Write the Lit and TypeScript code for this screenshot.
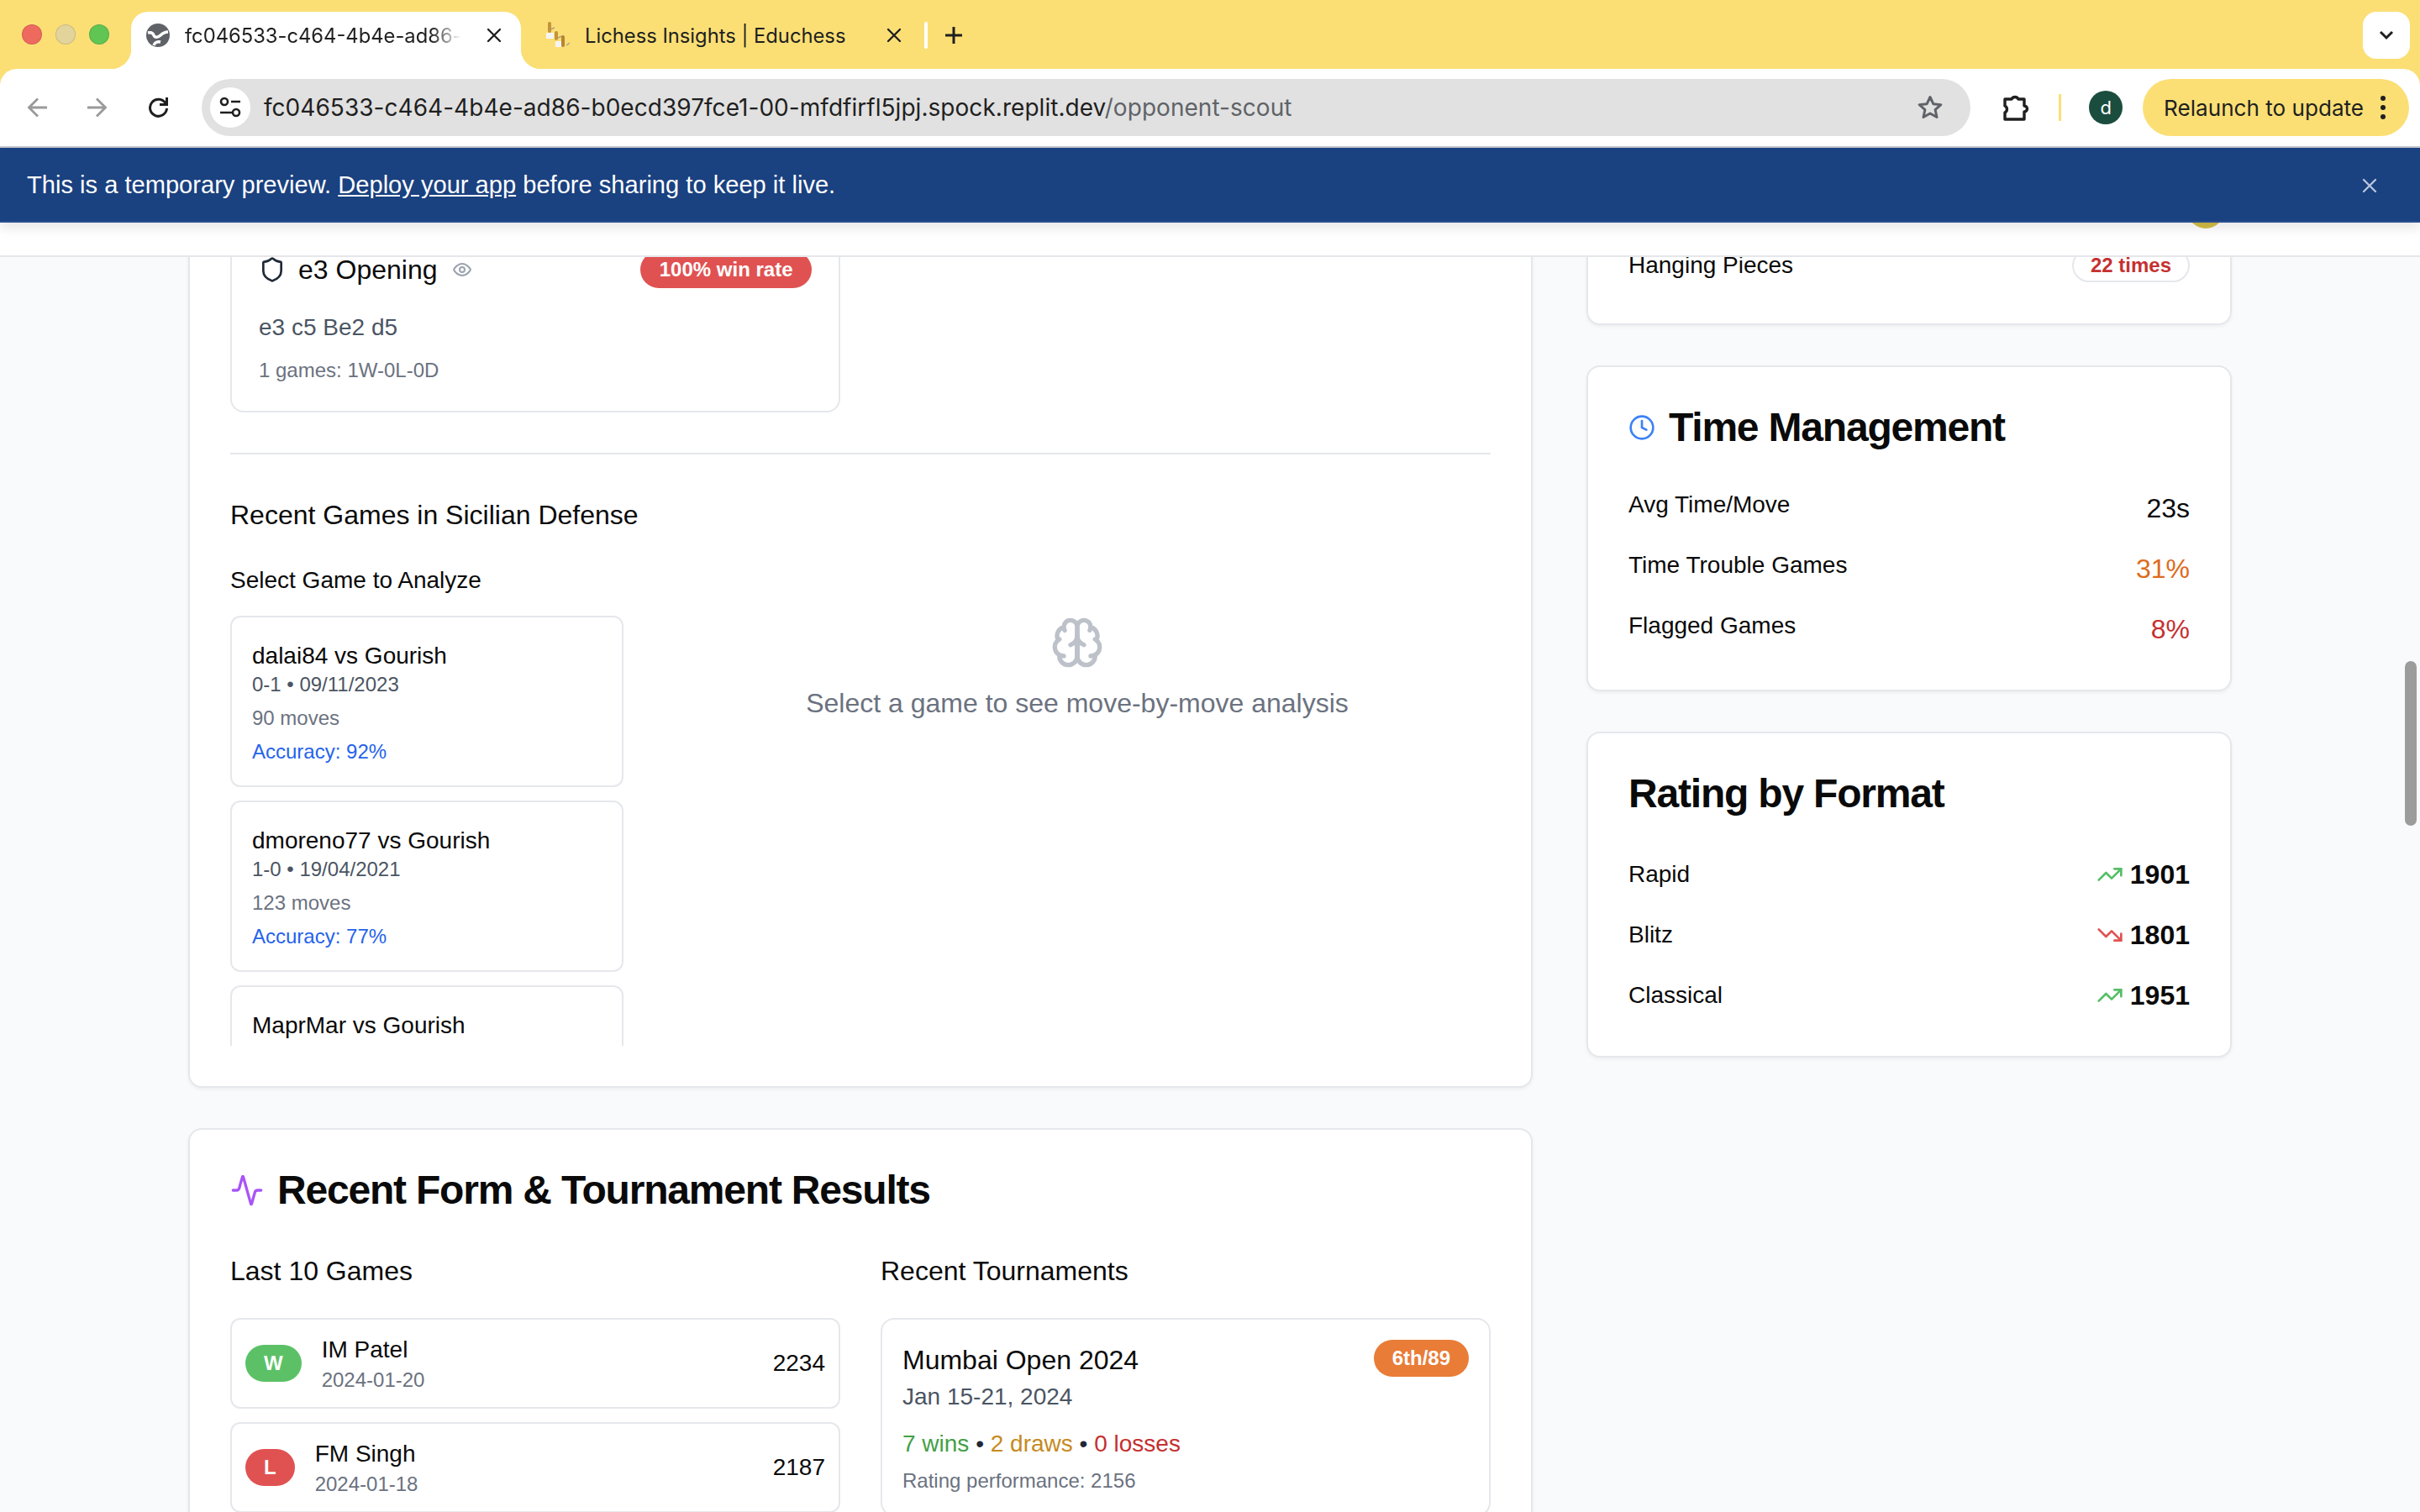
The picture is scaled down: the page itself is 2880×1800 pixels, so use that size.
import { LitElement, html, css, svg } from 'lit';
import { customElement } from 'lit/decorators.js';

const icon = (paths: unknown, size: number, cls = '') => html`
    <svg class="icon ${cls}" width=${size} height=${size} viewBox="0 0 24 24" fill="none" stroke="currentColor"
        stroke-width="2" stroke-linecap="round" stroke-linejoin="round">${paths}</svg>
`;

const SHIELD = svg`<path d="M20 13c0 5-3.5 7.5-7.66 8.95a1 1 0 0 1-.67-.01C7.5 20.5 4 18 4 13V6a1 1 0 0 1 1-1c2 0 4.5-1.2 6.24-2.72a1.17 1.17 0 0 1 1.52 0C14.51 3.81 17 5 19 5a1 1 0 0 1 1 1z"/>`;
const EYE = svg`<path d="M2 12s3.5-7 10-7 10 7 10 7-3.5 7-10 7-10-7-10-7Z"/><circle cx="12" cy="12" r="3"/>`;
const BRAIN = svg`<path d="M12 5a3 3 0 1 0-5.997.125 4 4 0 0 0-2.526 5.77 4 4 0 0 0 .556 6.588A4 4 0 1 0 12 18Z"/><path d="M12 5a3 3 0 1 1 5.997.125 4 4 0 0 1 2.526 5.77 4 4 0 0 1-.556 6.588A4 4 0 1 1 12 18Z"/><path d="M15 13a4.5 4.5 0 0 1-3-4 4.5 4.5 0 0 1-3 4"/><path d="M17.599 6.5a3 3 0 0 0 .399-1.375"/><path d="M6.003 5.125A3 3 0 0 0 6.401 6.5"/><path d="M3.477 10.896a4 4 0 0 1 .585-.396"/><path d="M19.938 10.5a4 4 0 0 1 .585.396"/><path d="M6 18a4 4 0 0 1-1.967-.516"/><path d="M19.967 17.484A4 4 0 0 1 18 18"/><path d="M12 18V9"/>`;
const CLOCK = svg`<circle cx="12" cy="12" r="10"/><polyline points="12 6 12 12 16 14"/>`;
const ACTIVITY = svg`<path d="M22 12h-2.48a2 2 0 0 0-1.93 1.46l-2.35 8.36a.25.25 0 0 1-.48 0L9.24 2.18a.25.25 0 0 0-.48 0l-2.35 8.36A2 2 0 0 1 4.49 12H2"/>`;
const TREND_UP = svg`<polyline points="22 7 13.5 15.5 8.5 10.5 2 17"/><polyline points="16 7 22 7 22 13"/>`;
const TREND_DOWN = svg`<polyline points="22 17 13.5 8.5 8.5 13.5 2 7"/><polyline points="16 17 22 17 22 11"/>`;
const CROSS = svg`<path d="M6 6l12 12M18 6L6 18"/>`;

const GAMES = [
    { title: 'dalai84 vs Gourish', meta: '0-1 • 09/11/2023', moves: '90 moves', accuracy: 'Accuracy: 92%' },
    { title: 'dmoreno77 vs Gourish', meta: '1-0 • 19/04/2021', moves: '123 moves', accuracy: 'Accuracy: 77%' },
    { title: 'MaprMar vs Gourish', meta: '', moves: '', accuracy: '' },
];

const LAST_GAMES = [
    { result: 'W', name: 'IM Patel', date: '2024-01-20', rating: 2234 },
    { result: 'L', name: 'FM Singh', date: '2024-01-18', rating: 2187 },
];

const TIME_ROWS = [
    { label: 'Avg Time/Move', value: '23s', cls: '' },
    { label: 'Time Trouble Games', value: '31%', cls: 'orange' },
    { label: 'Flagged Games', value: '8%', cls: 'red' },
];

const RATINGS = [
    { label: 'Rapid', value: 1901, up: true },
    { label: 'Blitz', value: 1801, up: false },
    { label: 'Classical', value: 1951, up: true },
];

@customElement('app-root')
export class AppRoot extends LitElement {
    static styles = css`
        :host {
            display: block;
            position: relative;
            width: 2880px;
            height: 1800px;
            overflow: hidden;
            font-family: "Liberation Sans", Arial, sans-serif;
            color: #0a0a0a;
            background: #f9fafb;
        }
        .shell {
            display: flex;
            flex-direction: column;
            height: 1800px;
        }
        .icon {
            display: block;
            flex: none;
        }

        /* browser chrome */
        .tabbar {
            display: flex;
            align-items: flex-start;
            height: 82px;
            padding: 14px 12px 0 26px;
            box-sizing: border-box;
            background: #fbdf75;
            font-family: Inter, sans-serif;
            font-size: 23.75px;
            color: #1f1f1f;
        }
        .lights {
            display: flex;
            gap: 16px;
            margin: 15px 26px 0 0;
        }
        .lights span {
            width: 24px;
            height: 24px;
            border-radius: 50%;
            box-sizing: border-box;
            border: 1px solid rgba(0, 0, 0, .12);
        }
        .tab {
            display: flex;
            align-items: center;
            position: relative;
            width: 464px;
            height: 68px;
            padding: 0 18px 12px;
            box-sizing: border-box;
            border-radius: 20px 20px 0 0;
            background: #fff;
            white-space: nowrap;
        }
        .tab::before,
        .tab::after {
            content: '';
            position: absolute;
            bottom: 0;
            width: 24px;
            height: 24px;
        }
        .tab::before {
            left: -24px;
            background: radial-gradient(circle at 0 0, transparent 24px, #fff 24.5px);
        }
        .tab::after {
            right: -24px;
            background: radial-gradient(circle at 100% 0, transparent 24px, #fff 24.5px);
        }
        .tab-title {
            flex: 1;
            min-width: 0;
            margin-left: 18px;
            overflow: hidden;
        }
        .tab-title.fade {
            -webkit-mask-image: linear-gradient(90deg, #000 88%, transparent 99%);
            mask-image: linear-gradient(90deg, #000 88%, transparent 99%);
        }
        .tab-x {
            margin-left: 22px;
            color: #1f1f1f;
        }
        .tab.idle {
            width: 478px;
            background: none;
            padding: 0 20px 12px 30px;
        }
        .tab.idle::before,
        .tab.idle::after {
            display: none;
        }
        .tab-sep {
            width: 4px;
            height: 32px;
            margin: 12px 0 0 2px;
            border-radius: 2px;
            background: #fff;
        }
        .new-tab {
            margin: 17px 0 0 20px;
        }
        .tab-menu {
            display: flex;
            align-items: center;
            justify-content: center;
            width: 56px;
            height: 56px;
            margin-left: auto;
            border-radius: 16px;
            background: #fff;
        }
        .chrome-toolbar-wrap {
            background: #fbdf75;
        }
        .toolbar {
            display: flex;
            align-items: center;
            height: 94px;
            padding: 0 13px 2px 32px;
            box-sizing: border-box;
            background: #fff;
            border-radius: 20px 20px 0 0;
            box-shadow: inset 0 -2px 0 #c6c9ce;
            font-family: Inter, sans-serif;
            color: #1f1f1f;
        }
        .nav {
            display: flex;
            gap: 48px;
            color: #9a9a9a;
        }
        .nav .active {
            color: #1f1f1f;
        }
        .omnibox {
            display: flex;
            align-items: center;
            width: 2106px;
            height: 68px;
            margin-left: 40px;
            padding: 0 32px 0 10px;
            box-sizing: border-box;
            border-radius: 34px;
            background: #e1e1e1;
            font-size: 28px;
        }
        .site-info {
            display: flex;
            align-items: center;
            justify-content: center;
            width: 48px;
            height: 48px;
            border-radius: 50%;
            background: #fff;
        }
        .url {
            flex: 1;
            margin-left: 16px;
            white-space: nowrap;
            letter-spacing: .04px;
        }
        .url span {
            color: #5f6368;
        }
        .tool-ext {
            margin-left: 37px;
        }
        .tool-sep {
            width: 3px;
            height: 32px;
            margin-left: 34px;
            background: #fbdf75;
        }
        .avatar {
            display: flex;
            align-items: center;
            justify-content: center;
            width: 40px;
            height: 40px;
            margin-left: 33px;
            border-radius: 50%;
            background: #1b4d3e;
            color: #fff;
            font-size: 22px;
        }
        .relaunch {
            display: flex;
            align-items: center;
            width: 317px;
            height: 68px;
            margin-left: 24px;
            padding: 0 28px 0 25px;
            box-sizing: border-box;
            border-radius: 34px;
            background: #fbdf75;
            font-size: 26.1px;
            white-space: nowrap;
        }
        .dots {
            display: flex;
            flex-direction: column;
            gap: 5px;
            margin-left: auto;
        }
        .dots i {
            width: 6px;
            height: 6px;
            border-radius: 50%;
            background: #1f1f1f;
        }
        .banner {
            display: flex;
            align-items: center;
            justify-content: space-between;
            position: relative;
            z-index: 2;
            height: 89px;
            padding: 2px 46px 0 32px;
            box-sizing: border-box;
            background: #1a4180;
            border-bottom: 2px solid #2a4f90;
            box-shadow: 0 6px 14px rgba(0, 0, 0, .1);
            color: #fff;
            font-size: 29.1px;
        }
        .banner a {
            color: inherit;
            font-weight: 500;
            text-decoration: underline;
        }
        .banner .icon {
            color: #b9c6dc;
        }

        /* site */
        .site-header {
            display: flex;
            justify-content: flex-end;
            height: 41px;
            padding-right: 233px;
            box-sizing: border-box;
            overflow: hidden;
            background: #fff;
            border-bottom: 2px solid #e5e7eb;
            position: relative;
            z-index: 1;
        }
        .site-avatar {
            width: 44px;
            height: 44px;
            margin-top: -37px;
            border-radius: 50%;
            background: #d4be47;
        }
        .viewport {
            flex: 1;
            min-height: 0;
            overflow: hidden;
        }
        .columns {
            display: flex;
            gap: 64px;
            margin-top: -89px;
            padding-left: 224px;
        }
        .left {
            display: flex;
            flex-direction: column;
            gap: 48px;
            width: 1600px;
            flex: none;
        }
        .right {
            display: flex;
            flex-direction: column;
            gap: 48px;
            width: 768px;
            flex: none;
        }
        .card {
            box-sizing: border-box;
            padding: 48px;
            border: 2px solid #e5e7eb;
            border-radius: 16px;
            background: #fff;
            box-shadow: 0 2px 4px rgba(0, 0, 0, .05);
        }
        .card-title {
            display: flex;
            align-items: center;
            height: 48px;
            margin: 0 0 48px;
            font-size: 48px;
            line-height: 48px;
            font-weight: 700;
            letter-spacing: -1.2px;
        }

        /* opening card */
        .opening {
            width: 726px;
            box-sizing: border-box;
            padding: 30px 32px 32px;
            border: 2px solid #e5e7eb;
            border-radius: 16px;
        }
        .opening-head {
            display: flex;
            align-items: center;
            justify-content: space-between;
            height: 44px;
            margin-bottom: 27px;
        }
        .opening-name {
            display: flex;
            align-items: center;
            font-size: 32px;
        }
        .shield {
            color: #1f2937;
            margin-right: 15px;
        }
        .eye {
            color: #9ca3af;
            margin-left: 18px;
        }
        .badge {
            display: flex;
            align-items: center;
            height: 44px;
            padding: 0 22px;
            box-sizing: border-box;
            border-radius: 22px;
            color: #fff;
            font-size: 24px;
            font-weight: 700;
        }
        .badge.loss {
            background: #e05252;
            padding: 0 22.5px;
        }
        .badge.place {
            background: #e97c37;
        }
        .moves {
            font-size: 28px;
            line-height: 40px;
            color: #4b5563;
        }
        .note {
            margin-top: 15px;
            font-size: 24px;
            line-height: 32px;
            color: #6b7280;
        }
        .divider {
            height: 2px;
            margin: 48px 0;
            background: #e5e7eb;
        }
        .sub {
            margin: 0;
            font-size: 32px;
            line-height: 48px;
            font-weight: 400;
        }
        .select-label {
            margin: 32px 0 24px;
            padding-top: 2px;
            height: 38px;
            font-size: 28px;
            line-height: 40px;
        }
        .analysis {
            display: grid;
            grid-template-columns: 468px 984px;
            gap: 48px;
        }
        .game-list {
            display: flex;
            flex-direction: column;
            gap: 16px;
            height: 512px;
            overflow: hidden;
        }
        .game {
            flex: none;
            padding: 24px;
            border: 2px solid #e5e7eb;
            border-radius: 12px;
        }
        .game-title {
            padding-top: 2px;
            height: 38px;
            font-size: 28px;
            line-height: 40px;
        }
        .game-meta {
            font-size: 24px;
            line-height: 32px;
            color: #4b5563;
        }
        .game-moves {
            margin-top: 8px;
            font-size: 24px;
            line-height: 32px;
            color: #6b7280;
        }
        .game-accuracy {
            margin-top: 8px;
            font-size: 24px;
            line-height: 32px;
            color: #2563eb;
        }
        .placeholder {
            display: flex;
            flex-direction: column;
            align-items: center;
            gap: 16px;
            color: #6b7280;
            font-size: 32px;
            line-height: 48px;
        }
        .placeholder .icon {
            color: #bdc1c9;
        }

        /* recent form */
        .purple {
            color: #a855f7;
            margin-right: 16px;
        }
        .form-grid {
            display: grid;
            grid-template-columns: 726px 726px;
            gap: 48px;
        }
        .form-grid .sub {
            margin-bottom: 32px;
        }
        .result-list {
            display: flex;
            flex-direction: column;
            gap: 16px;
        }
        .result {
            display: flex;
            align-items: center;
            justify-content: space-between;
            padding: 16px;
            border: 2px solid #e5e7eb;
            border-radius: 12px;
        }
        .result-main {
            display: flex;
            align-items: center;
            gap: 24px;
        }
        .pill {
            display: flex;
            align-items: center;
            justify-content: center;
            height: 44px;
            padding: 0 22px;
            border-radius: 22px;
            color: #fff;
            font-size: 24px;
            font-weight: 700;
        }
        .pill.w {
            background: #5cc166;
        }
        .pill.l {
            background: #e05252;
        }
        .result-name {
            font-size: 28px;
            line-height: 40px;
        }
        .result-date {
            font-size: 24px;
            line-height: 32px;
            color: #6b7280;
        }
        .result-rating {
            font-size: 28px;
        }
        .tournament {
            padding: 24px;
            border: 2px solid #e5e7eb;
            border-radius: 16px;
        }
        .tournament-head {
            display: flex;
            align-items: flex-start;
            justify-content: space-between;
        }
        .tournament-name {
            font-size: 32px;
            line-height: 48px;
        }
        .tournament-date {
            font-size: 28px;
            line-height: 40px;
            color: #4b5563;
        }
        .tournament-score {
            margin-top: 16px;
            font-size: 28px;
            line-height: 40px;
            color: #1f2937;
        }
        .score-w { color: #43a047; }
        .score-d { color: #c68a22; }
        .score-l { color: #c53030; }
        .tournament-perf {
            margin-top: 8px;
            font-size: 24px;
            line-height: 32px;
            color: #6b7280;
        }

        /* sidebar */
        .tips {
            padding-top: 77px;
            padding-bottom: 49px;
        }
        .tip-row {
            display: flex;
            align-items: center;
            justify-content: space-between;
            height: 40px;
            font-size: 28px;
        }
        .tip-badge {
            display: flex;
            align-items: center;
            height: 40px;
            padding: 0 20px;
            box-sizing: border-box;
            border: 2px solid #e5e7eb;
            border-radius: 20px;
            color: #c53030;
            font-size: 24px;
            font-weight: 700;
        }
        .clock {
            color: #3b82f6;
            margin-right: 16px;
        }
        .stat-rows {
            display: flex;
            flex-direction: column;
            gap: 24px;
        }
        .stat {
            display: flex;
            justify-content: space-between;
            font-size: 28px;
            line-height: 40px;
        }
        .stat b {
            font-size: 32px;
            line-height: 48px;
            font-weight: 400;
        }
        .stat b.orange { color: #dd6b20; }
        .stat b.red { color: #c53030; }
        .rating {
            align-items: center;
        }
        .rating-value {
            display: flex;
            align-items: center;
            gap: 8px;
            font-size: 32px;
            line-height: 48px;
            font-weight: 700;
        }
        .up { color: #55bf66; }
        .down { color: #e05252; }

        .scrollbar {
            position: absolute;
            top: 787px;
            right: 4px;
            width: 14px;
            height: 196px;
            border-radius: 7px;
            background: #9c9c9c;
        }
    `;

    private renderChrome() {
        return html`
            <div class="tabbar">
                <div class="lights">
                    <span style="background:#ee6a5f"></span>
                    <span style="background:#e2d49a"></span>
                    <span style="background:#61c554"></span>
                </div>
                <div class="tab">
                    <svg width="28" height="28" viewBox="0 0 28 28" style="flex:none">
                        <circle cx="14" cy="14" r="14" fill="#5f6368"/>
                        <path d="M2 11c4-1 6 0 7 3s5 3 8 0c2-2 5-4 9-4M9 26c1-3 4-5 8-4" fill="none" stroke="#fff" stroke-width="3.4"/>
                    </svg>
                    <div class="tab-title fade">fc046533-c464-4b4e-ad86-b0ecd397fce1-00-mfdfirfl5jpj</div>
                    ${icon(CROSS, 28, 'tab-x')}
                </div>
                <div class="tab idle">
                    <svg width="28" height="32" viewBox="0 0 28 32" style="flex:none">
                        <rect x="0" y="13" width="9" height="7" fill="#f4f4f4"/>
                        <rect x="11" y="23" width="7" height="7" fill="#f4f4f4"/>
                        <path d="M5 9l5-2M14 19l5-2M24 28l4-3" stroke="#a8a28a" stroke-width="1.5" fill="none"/>
                        <rect x="2" y="0" width="4" height="13" rx="2" fill="#c4943a"/>
                        <rect x="10" y="11" width="4" height="11" rx="2" fill="#c4943a"/>
                        <rect x="18" y="16" width="4" height="14" rx="2" fill="#b9852e"/>
                    </svg>
                    <div class="tab-title">Lichess Insights | Educhess</div>
                    ${icon(CROSS, 28, 'tab-x')}
                </div>
                <div class="tab-sep"></div>
                <div class="new-tab">
                    <svg class="icon" width="22" height="22" viewBox="0 0 22 22" fill="none" stroke="#1f1f1f" stroke-width="3">
                        <path d="M11 1v20M1 11h20"/>
                    </svg>
                </div>
                <div class="tab-menu">
                    <svg width="20" height="12" viewBox="0 0 20 12" fill="none" stroke="#1f1f1f" stroke-width="3">
                        <path d="M3 2l7 7 7-7"/>
                    </svg>
                </div>
            </div>
            <div class="chrome-toolbar-wrap">
                <div class="toolbar">
                    <div class="nav">
                        <svg width="24" height="24" viewBox="0 0 24 24" fill="none" stroke="currentColor" stroke-width="2.8">
                            <path d="M24 12H3M13 1.5L2.5 12 13 22.5"/>
                        </svg>
                        <svg width="24" height="24" viewBox="0 0 24 24" fill="none" stroke="currentColor" stroke-width="2.8">
                            <path d="M0 12h21M11 1.5L21.5 12 11 22.5"/>
                        </svg>
                        <svg class="active" width="24" height="24" viewBox="0 0 24 24" fill="none" stroke="currentColor" stroke-width="3">
                            <path d="M21 7a10 10 0 1 0 1.5 6M22.5 0v8.500h-8.500"/>
                        </svg>
                    </div>
                    <div class="omnibox">
                        <div class="site-info">
                            <svg width="26" height="26" viewBox="0 0 26 26" fill="none" stroke="#1f1f1f" stroke-width="2.6">
                                <circle cx="6" cy="6" r="4"/><path d="M14 6h11M1 19h14"/><circle cx="20" cy="19" r="4"/>
                            </svg>
                        </div>
                        <div class="url">fc046533-c464-4b4e-ad86-b0ecd397fce1-00-mfdfirfl5jpj.spock.replit.dev<span>/opponent-scout</span></div>
                        <svg width="32" height="32" viewBox="0 0 32 32" fill="none" stroke="#5f6368" stroke-width="3" stroke-linejoin="round">
                            <path d="M16 3.500l3.800 8.200 9 1-6.700 6 1.900 8.800L16 23l-8 4.500 1.900-8.800-6.700-6 9-1z"/>
                        </svg>
                    </div>
                    <svg class="tool-ext" width="34" height="34" viewBox="0 0 34 34" fill="none" stroke="#1f1f1f" stroke-width="3.400" stroke-linejoin="round">
                        <path d="M4 7h8a4.500 4.500 0 0 1 8 0h7v8a3.500 3.500 0 0 1 0 7v9H4v-8a4.500 4.500 0 0 0 0-8z"/>
                    </svg>
                    <div class="tool-sep"></div>
                    <div class="avatar">d</div>
                    <div class="relaunch">
                        Relaunch to update
                        <div class="dots"><i></i><i></i><i></i></div>
                    </div>
                </div>
            </div>
            <div class="banner">
                <div>This is a temporary preview. <a>Deploy your app</a> before sharing to keep it live.</div>
                ${icon(CROSS, 28)}
            </div>
        `;
    }

    private renderOpeningCard() {
        return html`
            <div class="card">
                <div class="opening">
                    <div class="opening-head">
                        <div class="opening-name">
                            ${icon(SHIELD, 32, 'shield')}
                            e3 Opening
                            ${icon(EYE, 24, 'eye')}
                        </div>
                        <div class="badge loss">100% win rate</div>
                    </div>
                    <div class="moves">e3 c5 Be2 d5</div>
                    <div class="note">1 games: 1W-0L-0D</div>
                </div>
                <div class="divider"></div>
                <h3 class="sub">Recent Games in Sicilian Defense</h3>
                <div class="select-label">Select Game to Analyze</div>
                <div class="analysis">
                    <div class="game-list">
                        ${GAMES.map(g => html`
                            <div class="game">
                                <div class="game-title">${g.title}</div>
                                <div class="game-meta">${g.meta}</div>
                                <div class="game-moves">${g.moves}</div>
                                <div class="game-accuracy">${g.accuracy}</div>
                            </div>
                        `)}
                    </div>
                    <div class="placeholder">
                        ${icon(BRAIN, 64)}
                        <div>Select a game to see move-by-move analysis</div>
                    </div>
                </div>
            </div>
        `;
    }

    private renderFormCard() {
        return html`
            <div class="card">
                <h2 class="card-title">${icon(ACTIVITY, 40, 'purple')}Recent Form &amp; Tournament Results</h2>
                <div class="form-grid">
                    <div>
                        <h3 class="sub">Last 10 Games</h3>
                        <div class="result-list">
                            ${LAST_GAMES.map(g => html`
                                <div class="result">
                                    <div class="result-main">
                                        <div class="pill ${g.result === 'W' ? 'w' : 'l'}">${g.result}</div>
                                        <div>
                                            <div class="result-name">${g.name}</div>
                                            <div class="result-date">${g.date}</div>
                                        </div>
                                    </div>
                                    <div class="result-rating">${g.rating}</div>
                                </div>
                            `)}
                        </div>
                    </div>
                    <div>
                        <h3 class="sub">Recent Tournaments</h3>
                        <div class="tournament">
                            <div class="tournament-head">
                                <div class="tournament-name">Mumbai Open 2024</div>
                                <div class="badge place">6th/89</div>
                            </div>
                            <div class="tournament-date">Jan 15-21, 2024</div>
                            <div class="tournament-score">
                                <span class="score-w">7 wins</span> • <span class="score-d">2 draws</span> • <span class="score-l">0 losses</span>
                            </div>
                            <div class="tournament-perf">Rating performance: 2156</div>
                        </div>
                    </div>
                </div>
            </div>
        `;
    }

    private renderSidebar() {
        return html`
            <div class="card tips">
                <div class="tip-row">
                    <span>Hanging Pieces</span>
                    <span class="tip-badge">22 times</span>
                </div>
            </div>
            <div class="card">
                <h2 class="card-title">${icon(CLOCK, 32, 'clock')}Time Management</h2>
                <div class="stat-rows">
                    ${TIME_ROWS.map(r => html`
                        <div class="stat"><span>${r.label}</span><b class=${r.cls}>${r.value}</b></div>
                    `)}
                </div>
            </div>
            <div class="card">
                <h2 class="card-title">Rating by Format</h2>
                <div class="stat-rows">
                    ${RATINGS.map(r => html`
                        <div class="stat rating">
                            <span>${r.label}</span>
                            <span class="rating-value">
                                ${icon(r.up ? TREND_UP : TREND_DOWN, 32, r.up ? 'up' : 'down')}
                                ${r.value}
                            </span>
                        </div>
                    `)}
                </div>
            </div>
        `;
    }

    render() {
        return html`
            <div class="shell">
                ${this.renderChrome()}
                <div class="site-header"><div class="site-avatar"></div></div>
                <div class="viewport">
                    <div class="columns">
                        <div class="left">
                            ${this.renderOpeningCard()}
                            ${this.renderFormCard()}
                        </div>
                        <div class="right">${this.renderSidebar()}</div>
                    </div>
                </div>
            </div>
            <div class="scrollbar"></div>
        `;
    }
}
